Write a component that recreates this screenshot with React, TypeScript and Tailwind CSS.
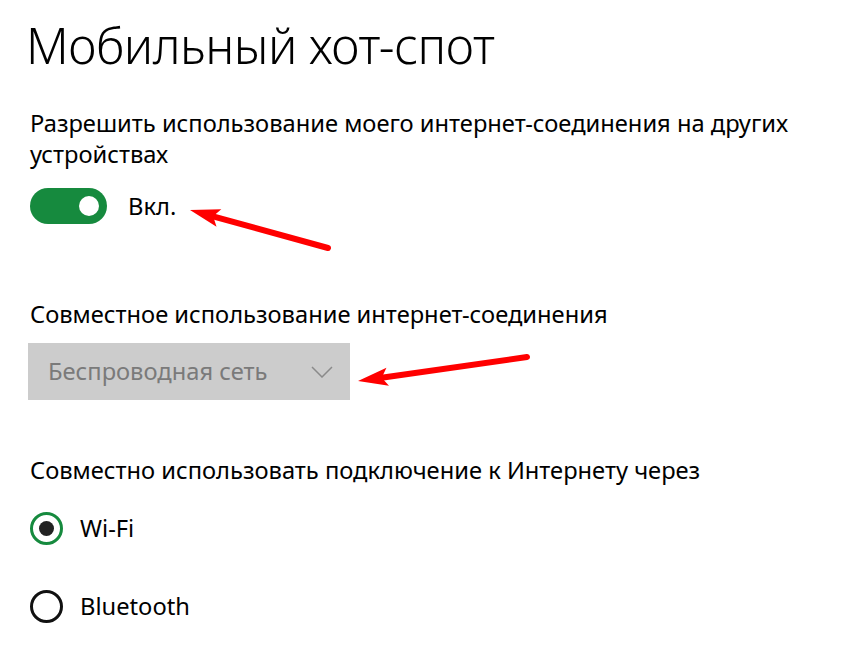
import React from "react";

function Arrow({ x1, y1, x2, y2 }: { x1: number; y1: number; x2: number; y2: number }) {
  const dx = x2 - x1;
  const dy = y2 - y1;
  const len = Math.hypot(dx, dy);
  const ux = dx / len;
  const uy = dy / len;
  const headLen = 30;
  const headW = 9;
  const bx = x2 - ux * headLen;
  const by = y2 - uy * headLen;
  const px = -uy;
  const py = ux;
  const pts = `${x2},${y2} ${bx + px * headW},${by + py * headW} ${bx + ux * 6},${by + uy * 6} ${bx - px * headW},${by - py * headW}`;
  return (
    <g>
      <line x1={x1} y1={y1} x2={bx + ux * 8} y2={by + uy * 8} stroke="#ff0000" strokeWidth={6} strokeLinecap="round" />
      <polygon points={pts} fill="#ff0000" />
    </g>
  );
}

export default function App() {
  return (
    <div
      className="relative w-[850px] h-[653px] bg-white overflow-hidden text-black"
      style={{ fontFamily: '"Noto Sans", "Open Sans", sans-serif' }}
    >
      <div className="flex flex-col pl-[30px]">
        <h1 className="ml-[-4px] mt-[15px] text-[49px] leading-[60px] font-light tracking-[-0.5px]">
          Мобильный хот-спот
        </h1>
        <p className="mt-[33px] text-[23.7px] leading-[31px] w-[810px]">
          Разрешить использование моего интернет-соединения на других устройствах
        </p>
        <div className="mt-[18px] flex items-center gap-[21px]">
          <div className="w-[77px] h-[36px] rounded-full bg-[#168a3e] flex items-center justify-end pr-[8px]">
            <div className="w-[20px] h-[20px] rounded-full bg-white" />
          </div>
          <span className="text-[23.7px] leading-[31px]">Вкл.</span>
        </div>
        <p className="mt-[75px] text-[23.7px] leading-[31px]">
          Совместное использование интернет-соединения
        </p>
        <div className="mt-[13px] ml-[-2px] w-[322px] h-[57px] bg-[#cccccc] flex items-center justify-between pl-[20px] pr-[17px]">
          <span className="text-[23.7px] text-[#7a7a7a]">Беспроводная сеть</span>
          <svg width="22" height="12" viewBox="0 0 22 12">
            <polyline points="1,1 11,11 21,1" fill="none" stroke="#8a8a8a" strokeWidth="1.5" />
          </svg>
        </div>
        <p className="mt-[55px] text-[23.7px] leading-[31px]">
          Совместно использовать подключение к Интернету через
        </p>
        <div className="mt-[26px] flex items-center gap-[17px]">
          <div className="w-[33px] h-[33px] rounded-full border-[3px] border-[#168a3e] flex items-center justify-center">
            <div className="w-[15px] h-[15px] rounded-full bg-[#222]" />
          </div>
          <span className="text-[23.7px] leading-[31px]">Wi-Fi</span>
        </div>
        <div className="mt-[45px] flex items-center gap-[17px]">
          <div className="w-[33px] h-[33px] rounded-full border-[3px] border-[#111]" />
          <span className="text-[23.7px] leading-[31px]">Bluetooth</span>
        </div>
      </div>
      <svg className="absolute left-0 top-0 pointer-events-none" width="850" height="653">
        <Arrow x1={328} y1={248} x2={190} y2={210} />
        <Arrow x1={527} y1={357} x2={358} y2={381} />
      </svg>
    </div>
  );
}
